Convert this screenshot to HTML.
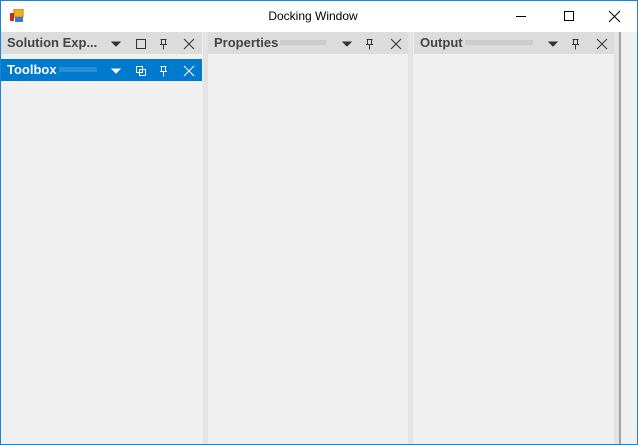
<html><head><style>
body{margin:0;width:638px;height:445px;overflow:hidden;font-family:"Liberation Sans",sans-serif;}
.win{position:absolute;left:0;top:0;width:636px;height:443px;border:1px solid #1883d7;background:#f0f0f0;}
.title{position:absolute;left:0;top:0;width:636px;height:31px;background:#fff;}
.title .t{position:absolute;left:0;width:624px;text-align:center;top:8px;font-size:12px;color:#000;}
.abs{position:absolute}
.hdr{position:absolute;height:22px;background:#dcdcdc;font-weight:bold;font-size:13px;color:#444;}
.hdr span.n{position:absolute;left:6px;top:3px;}
.dots{position:absolute;top:8px;height:5px;background-image:radial-gradient(circle,#999 0.6px,transparent 0.7px);background-size:2px 2px;}
.split{position:absolute;top:31px;width:5px;height:412px;background:#e3e3e3;}
</style></head><body>
<div class="win">
<div class="title">
<svg class="abs" style="left:9px;top:8px" width="14" height="14"><rect x="4" y="0" width="9" height="8" fill="#f0b020" stroke="#c08000"/><rect x="0" y="4" width="4" height="8" fill="#c03020"/><rect x="5" y="8" width="8" height="5" fill="#3a78d0"/></svg>
<div class="t">Docking Window</div>
<svg class="abs" style="left:515px;top:8px" width="110" height="14" fill="none" stroke="#000" stroke-width="1"><line x1="0" y1="7.5" x2="10" y2="7.5"/><rect x="48.5" y="2.5" width="9" height="9"/><path d="M93 2L104 13M104 2L93 13"/></svg>
</div>
<div class="hdr" style="left:0;top:31px;width:201px;"><span class="n">Solution Exp...</span>
<svg class="abs" style="left:108px;top:6px" width="90" height="12" fill="none" stroke="#333"><path d="M3 4h8l-4 4z" fill="#333"/><rect x="27.5" y="1.5" width="9" height="9"/><path d="M51.5 1.5h6M52.5 1.5v5M56.5 1.5v5M51 6.5h7M54.5 6.5v5"/><path d="M75 1l10 10M85 1L75 11"/></svg></div>
<div class="hdr" style="left:0;top:58px;width:201px;background:#007acc;color:#fff;"><span class="n">Toolbox</span>
<div class="dots" style="left:58px;width:38px;background-image:radial-gradient(circle,#9cc8ee 0.6px,transparent 0.7px)"></div>
<svg class="abs" style="left:108px;top:6px" width="90" height="12" fill="none" stroke="#fff"><path d="M3 4h8l-4 4z" fill="#fff"/><rect x="27.5" y="1.5" width="6" height="6"/><rect x="30.5" y="4.5" width="6" height="6"/><path d="M51.5 1.5h6M52.5 1.5v5M56.5 1.5v5M51 6.5h7M54.5 6.5v5"/><path d="M75 1l10 10M85 1L75 11"/></svg></div>
<div class="split" style="left:202px"></div>
<div class="hdr" style="left:207px;top:31px;width:200px;"><span class="n">Properties</span>
<div class="dots" style="left:72px;width:46px"></div>
<svg class="abs" style="left:133px;top:6px" width="65" height="12" fill="none" stroke="#333"><path d="M2 4h8l-4 4z" fill="#333"/><path d="M25.5 1.5h6M26.5 1.5v5M30.5 1.5v5M25 6.5h7M28.5 6.5v5"/><path d="M50 1l10 10M60 1L50 11"/></svg></div>
<div class="split" style="left:407px"></div>
<div class="hdr" style="left:413px;top:31px;width:200px;"><span class="n">Output</span>
<div class="dots" style="left:51px;width:68px"></div>
<svg class="abs" style="left:133px;top:6px" width="65" height="12" fill="none" stroke="#333"><path d="M2 4h8l-4 4z" fill="#333"/><path d="M25.5 1.5h6M26.5 1.5v5M30.5 1.5v5M25 6.5h7M28.5 6.5v5"/><path d="M50 1l10 10M60 1L50 11"/></svg></div>
<div class="split" style="left:613px"></div>
<div class="abs" style="left:618px;top:31px;width:2px;height:412px;background:#a0a0a0"></div>
</div>
</body></html>
